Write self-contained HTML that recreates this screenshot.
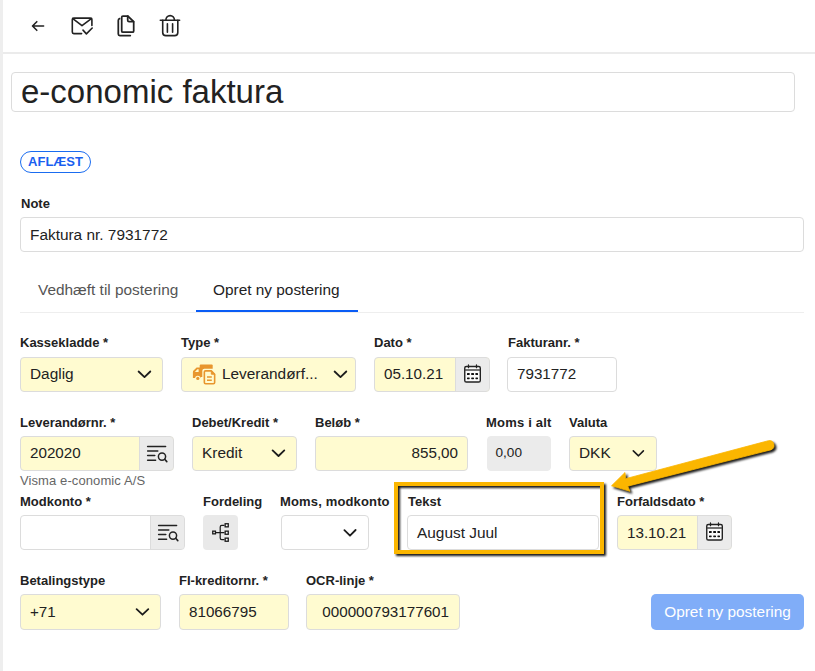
<!DOCTYPE html>
<html><head><meta charset="utf-8">
<style>
*{box-sizing:border-box;margin:0;padding:0}
html,body{width:815px;height:671px;overflow:hidden;background:#fff;font-family:"Liberation Sans",sans-serif;color:#222}
.abs{position:absolute}
.lbar{left:0;top:0;width:3px;height:671px;background:#eeeeee}
.hline{left:3px;top:52px;width:812px;height:2px;background:#ebebeb}
.lbl{position:absolute;font-size:13px;font-weight:bold;color:#222;line-height:15px;white-space:nowrap}
.inp{position:absolute;height:35px;border:1px solid #dcdcdc;border-radius:4px;background:#fff;font-size:15.4px;letter-spacing:0;line-height:32px;padding-left:9px;white-space:nowrap;overflow:hidden;color:#222}
.y{background:#fffbd0}
.n{letter-spacing:0;font-size:15.2px}
.dn{padding-top:1px}
.sbtn{position:absolute;top:-1px;right:-1px;bottom:-1px;background:#ebebeb;border:1px solid #dcdcdc;border-left:1px solid #dcdcdc;border-radius:0 4px 4px 0}
svg{position:absolute;overflow:visible}
</style></head><body>
<div class="abs lbar"></div>
<div class="abs hline"></div>

<!-- toolbar icons -->
<svg style="left:0;top:0" width="200" height="52" viewBox="0 0 200 52">
  <g fill="none" stroke="#222" stroke-width="1.6" stroke-linecap="round" stroke-linejoin="round">
    <path d="M32.6 26 H43.6 M36.8 21.7 L32.5 26 L36.8 30.3"/>
    <!-- mail -->
    <path d="M81.6 33.6 H73.8 Q72.3 33.6 72.3 32.1 V19.6 Q72.3 18.1 73.8 18.1 H90.4 Q91.9 18.1 91.9 19.6 V25.4"/>
    <path d="M72.8 18.6 L82 25.6 L91.4 18.6"/>
    <path d="M83 30.1 L86.4 33.9 L92.2 28"/>
    <!-- copy -->
    <g stroke-width="1.75"><path d="M119.6 18.7 Q118.3 19.1 118.3 20.6 V34.1 Q118.3 35.6 119.8 35.6 H130.3"/>
    <path d="M127.7 16 H123 Q121.7 16 121.7 17.3 V30.9 Q121.7 32.2 123 32.2 H132.4 Q133.7 32.2 133.7 30.9 V21.7 Z"/>
    <path d="M127.7 16.2 V20.3 Q127.7 21.7 129.1 21.7 H133.5"/></g>
    <!-- trash -->
    <path d="M160.3 20.2 H179.6"/>
    <path d="M165.9 20 A4.25 4.4 0 0 1 174.4 20"/>
    <path d="M162.7 20.4 V32.4 Q162.7 35.6 165.9 35.6 H174.6 Q177.8 35.6 177.8 32.4 V20.4"/>
    <path d="M167.4 23.8 V32.3 M172.6 23.8 V32.3"/>
  </g>
</svg>

<!-- title -->
<div class="inp" style="left:11px;top:72px;width:784px;height:40px;font-size:33px;letter-spacing:0;line-height:37px;padding-left:9px">e-conomic faktura</div>

<!-- badge -->
<div class="abs" style="left:20px;top:151px;width:71px;height:22px;border:1px solid #1a6cf0;border-radius:11px;color:#1a5ff0;font-size:13px;font-weight:bold;line-height:20px;text-align:center">AFLÆST</div>

<div class="lbl" style="left:21px;top:196px">Note</div>
<div class="inp dn" style="left:20px;top:217px;width:784px">Faktura nr. 7931772</div>

<!-- tabs -->
<div class="abs" style="left:38px;top:281px;font-size:15.4px;color:#555;line-height:17px">Vedhæft til postering</div>
<div class="abs" style="left:213px;top:281px;font-size:15.4px;color:#222;line-height:17px">Opret ny postering</div>
<div class="abs" style="left:20px;top:312px;width:784px;height:1px;background:#eeeeee"></div>
<div class="abs" style="left:196px;top:310px;width:162px;height:2px;background:#0a5cf5"></div>

<!-- row 1 -->
<div class="lbl" style="left:20px;top:335px">Kassekladde *</div>
<div class="inp y" style="left:20px;top:357px;width:143px">Daglig
</div>
<div class="lbl" style="left:181px;top:335px">Type *</div>
<div class="inp y" style="left:181px;top:357px;width:175px;padding-left:40px">Leverandørf...
  <svg style="left:3px;top:2px" width="40" height="30" viewBox="0 0 40 30">
    <g fill="#e8962e">
      <rect x="14.7" y="4.4" width="13" height="12.6" rx="1"/>
      <path d="M7.9 18 V12 Q7.9 11.2 8.5 10.6 L11.6 7.4 H15.6 V18 Z"/>
    </g>
    <path d="M9.9 11.9 L12.4 9.3 H13.6 V11.9 Z" fill="#fffbd0"/>
    <circle cx="12.8" cy="18.4" r="2.7" fill="#fffbd0"/>
    <circle cx="12.8" cy="18.4" r="1.6" fill="#e8962e"/>
    <rect x="17.3" y="8.7" width="14.6" height="17.3" rx="2" fill="#fffbd0"/>
    <path d="M26.3 10.85 H20.6 Q19.35 10.85 19.35 12.1 V22.5 Q19.35 23.75 20.6 23.75 H28.4 Q29.65 23.75 29.65 22.5 V14.2 Z" fill="none" stroke="#e8962e" stroke-width="1.6" stroke-linejoin="round"/>
    <path d="M26.3 10.85 V14.2 H29.65 Z" fill="#e8962e" stroke="#e8962e" stroke-width="1" stroke-linejoin="round"/>
    <path d="M22 17 H26.8 M22 20.3 H26.8" stroke="#e8962e" stroke-width="1.5"/>
  </svg>
</div>
<div class="lbl" style="left:374px;top:335px">Dato *</div>
<div class="inp y n" style="left:374px;top:357px;width:116px">05.10.21
  <div class="sbtn" style="width:35px"></div>
  <svg style="left:87px;top:6px" width="20" height="20" viewBox="462 364 20 20">
    <rect x="464.75" y="366.5" width="15.55" height="15.5" rx="1.6" fill="#fafafa" stroke="#222" stroke-width="1.4"/>
    <path d="M465 370 H480" stroke="#444" stroke-width="1.6"/>
    <path d="M468.5 365 V367.7 M476.5 365 V367.7" stroke="#222" stroke-width="1.3" stroke-linecap="round"/>
    <g fill="#111">
      <rect x="467" y="373" width="2.7" height="2" rx=".6"/><rect x="471.2" y="373" width="2.8" height="2" rx=".6"/><rect x="475.4" y="373" width="2.6" height="2" rx=".6"/>
      <rect x="467" y="377.4" width="2.7" height="1.8" rx=".6"/><rect x="471.2" y="377.4" width="2.8" height="1.8" rx=".6"/><rect x="475.4" y="377.4" width="2.6" height="1.8" rx=".6"/>
    </g>
  </svg>
</div>
<div class="lbl" style="left:508px;top:335px">Fakturanr. *</div>
<div class="inp n" style="left:507px;top:357px;width:110px">7931772</div>

<!-- row 2 -->
<div class="lbl" style="left:20px;top:415px">Leverandørnr. *</div>
<div class="inp y n" style="left:20px;top:436px;width:154px">202020
  <div class="sbtn" style="width:35px"></div>
  <svg style="left:124px;top:6px" width="24" height="22" viewBox="145 443 24 22">
    <path d="M147.6 446.5 H165.6 M147.6 451 H157.8 M147.6 455.5 H154.8 M147.6 460.3 H155.6" stroke="#222" stroke-width="1.5" stroke-linecap="round"/>
    <circle cx="162" cy="456.6" r="3.6" fill="none" stroke="#222" stroke-width="1.5"/>
    <path d="M164.7 459.3 L166.8 461.6" stroke="#222" stroke-width="1.6" stroke-linecap="round"/>
  </svg>
</div>
<div class="lbl" style="left:192px;top:415px">Debet/Kredit *</div>
<div class="inp y" style="left:192px;top:436px;width:105px">Kredit
</div>
<div class="lbl" style="left:315px;top:415px">Beløb *</div>
<div class="inp y n" style="left:315px;top:436px;width:153px;text-align:right;padding-right:9px">855,00</div>
<div class="lbl" style="left:486px;top:415px;letter-spacing:0.2px">Moms i alt</div>
<div class="inp" style="left:487px;top:436px;width:64px;background:#ebebeb;border-color:#ebebeb;font-size:13.6px;letter-spacing:0;padding-left:7.5px;line-height:31px">0,00</div>
<div class="lbl" style="left:569px;top:415px">Valuta</div>
<div class="inp y" style="left:569px;top:436px;width:88px">DKK
</div>
<div class="abs" style="left:20px;top:473px;font-size:13px;letter-spacing:0.1px;color:#666;line-height:15px">Visma e-conomic A/S</div>

<!-- row 3 -->
<div class="lbl" style="left:20px;top:494px">Modkonto *</div>
<div class="inp dn" style="left:20px;top:515px;width:165px">
  <div class="sbtn" style="width:35px"></div>
  <svg style="left:135px;top:6px" width="24" height="22" viewBox="145 443 24 22">
    <path d="M147.6 446.5 H165.6 M147.6 451 H157.8 M147.6 455.5 H154.8 M147.6 460.3 H155.6" stroke="#222" stroke-width="1.5" stroke-linecap="round"/>
    <circle cx="162" cy="456.6" r="3.6" fill="none" stroke="#222" stroke-width="1.5"/>
    <path d="M164.7 459.3 L166.8 461.6" stroke="#222" stroke-width="1.6" stroke-linecap="round"/>
  </svg>
</div>
<div class="lbl" style="left:203px;top:494px">Fordeling</div>
<div class="abs" style="left:203px;top:515px;width:35px;height:35px;background:#e9e9e9;border-radius:4px"></div>
<svg style="left:0;top:0" width="815" height="671">
  <g fill="#fff" stroke="#1a1a1a" stroke-width="1.3">
    <rect x="212.75" y="531.15" width="2.7" height="2.7"/>
    <rect x="225.15" y="523.75" width="3.1" height="3.1"/>
    <rect x="225.15" y="531.15" width="3.1" height="3.1"/>
    <rect x="225.15" y="538.15" width="3.1" height="3.1"/>
  </g>
  <path d="M216 532.6 H224.5 M224.5 525.3 H221.8 Q220.2 525.3 220.2 526.9 V538.1 Q220.2 539.7 221.8 539.7 H224.5" fill="none" stroke="#1a1a1a" stroke-width="1.2"/>
</svg>
<div class="lbl" style="left:280px;top:494px;letter-spacing:0.15px">Moms, modkonto</div>
<div class="inp dn" style="left:281px;top:515px;width:88px">
</div>
<div class="lbl" style="left:408px;top:494px">Tekst</div>
<div class="inp dn" style="left:407px;top:515px;width:192px">August Juul</div>
<div class="lbl" style="left:617px;top:494px">Forfaldsdato *</div>
<div class="inp y n dn" style="left:617px;top:515px;width:115px">13.10.21
  <div class="sbtn" style="width:35px"></div>
  <svg style="left:86px;top:6px" width="20" height="20" viewBox="462 364 20 20">
    <rect x="464.75" y="366.5" width="15.55" height="15.5" rx="1.6" fill="#fafafa" stroke="#222" stroke-width="1.4"/>
    <path d="M465 370 H480" stroke="#444" stroke-width="1.6"/>
    <path d="M468.5 365 V367.7 M476.5 365 V367.7" stroke="#222" stroke-width="1.3" stroke-linecap="round"/>
    <g fill="#111">
      <rect x="467" y="373" width="2.7" height="2" rx=".6"/><rect x="471.2" y="373" width="2.8" height="2" rx=".6"/><rect x="475.4" y="373" width="2.6" height="2" rx=".6"/>
      <rect x="467" y="377.4" width="2.7" height="1.8" rx=".6"/><rect x="471.2" y="377.4" width="2.8" height="1.8" rx=".6"/><rect x="475.4" y="377.4" width="2.6" height="1.8" rx=".6"/>
    </g>
  </svg>
</div>

<!-- row 4 -->
<div class="lbl" style="left:20px;top:573px">Betalingstype</div>
<div class="inp y n dn" style="left:20px;top:594px;height:36px;line-height:32px;width:141px">+71
</div>
<div class="lbl" style="left:179px;top:573px">FI-kreditornr. *</div>
<div class="inp y n dn" style="left:179px;top:594px;height:36px;line-height:32px;width:110px">81066795</div>
<div class="lbl" style="left:306px;top:573px">OCR-linje *</div>
<div class="inp y n dn" style="left:306px;top:594px;height:36px;line-height:32px;width:154px;text-align:right;padding-right:10px">000000793177601</div>

<div class="abs" style="left:651px;top:594px;width:153px;height:36px;background:#80adf8;border-radius:5px;color:#fff;font-size:15.4px;line-height:36px;text-align:center">Opret ny postering</div>

<svg style="left:0;top:0" width="815" height="671">
  <g fill="none" stroke="#1c1c1c" stroke-width="1.8" stroke-linecap="round" stroke-linejoin="round">
    <path d="M138.6 371.5 L144.5 377.1 L150.3 371.5"/>
    <path d="M334.6 371.5 L340.5 377.1 L346.3 371.5"/>
    <path d="M272.6 450.4 L278.5 456 L284.3 450.4"/>
    <path d="M344.4 530.1 L350 535.7 L355.6 530"/>
    <path d="M136.6 609.2 L142.5 614.7 L148.3 609.2"/>
    <path d="M633.3 450.9 L638.5 455.8 L643.4 450.9" stroke-width="1.6"/>
  </g>
</svg>
<!-- highlight box -->
<div class="abs" style="left:394px;top:482px;width:210px;height:72px;border:4px solid #fbb600;filter:drop-shadow(2px 2px 1.2px rgba(0,0,0,0.9))"></div>
<!-- arrow -->
<svg style="left:0;top:0;filter:drop-shadow(2px 2px 1.2px rgba(0,0,0,0.9))" width="815" height="671">
  <path d="M611.5 485.8 L625 472.5 L625.5 478.7 L768.35 440.7 A4.75 4.75 0 0 1 770.65 449.9 L627.7 486.2 L630 491.3 Z" fill="#fbb600" stroke="#fbb600" stroke-width="0.8" stroke-linejoin="round"/>
</svg>

</body></html>
